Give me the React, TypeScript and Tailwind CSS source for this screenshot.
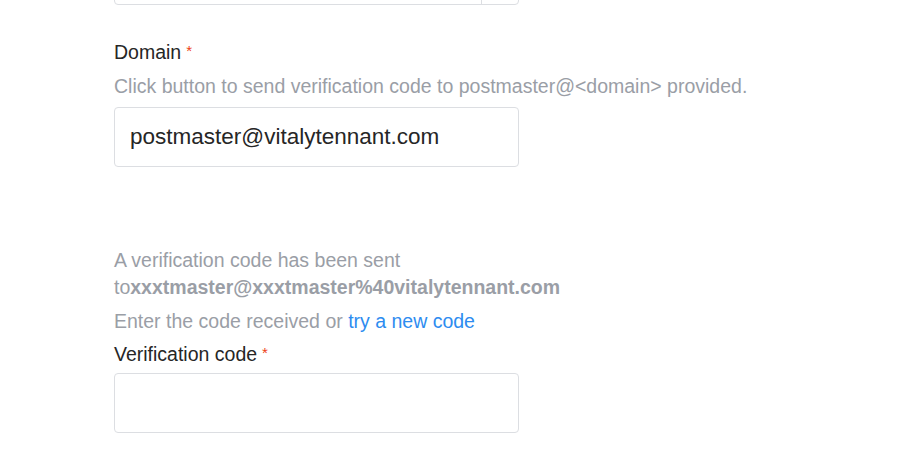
function Label({ children }: { children: React.ReactNode }) {
  return (
    <div className="flex h-6 items-center text-[19.5px] leading-6 text-[#262626]">
      {children}
      <span className="ml-[5px] -mt-[3px] text-[15px] leading-none text-[#ed4014]">*</span>
    </div>
  );
}

export default function App() {
  return (
    <div className="h-[471px] w-[924px] overflow-hidden bg-white pl-[114px] font-['Liberation_Sans',Arial,sans-serif]">
      <div className="-mt-[56px] flex h-[61px] w-[405px] rounded border border-[#dcdee2]">
        <div className="flex-1" />
        <div className="w-[37px] border-l border-[#dcdee2]" />
      </div>

      <div className="mt-[35px]">
        <Label>Domain</Label>
        <div className="mt-[10px] text-[19.5px] leading-6 text-[#9a9ea6]">
          Click button to send verification code to postmaster@&lt;domain&gt; provided.
        </div>
        <div className="mt-[9px] flex h-[60px] w-[405px] items-center rounded border border-[#dcdee2] px-[15px] text-[22.5px] text-[#262626]">
          postmaster@vitalytennant.com
        </div>
      </div>

      <div className="mt-[80px] text-[19.5px] leading-[27px] text-[#9a9ea6]">
        <div>A verification code has been sent</div>
        <div>
          to<span className="font-bold">xxxtmaster@xxxtmaster%40vitalytennant.com</span>
        </div>
      </div>
      <div className="mt-[8px] text-[19.5px] leading-6 text-[#9a9ea6]">
        Enter the code received or{" "}
        <span className="text-[#2d8cf0]">try a new code</span>
      </div>
      <div className="mt-[9px]">
        <Label>Verification code</Label>
        <div className="mt-[7px] h-[60px] w-[405px] rounded border border-[#dcdee2]" />
      </div>
    </div>
  );
}
